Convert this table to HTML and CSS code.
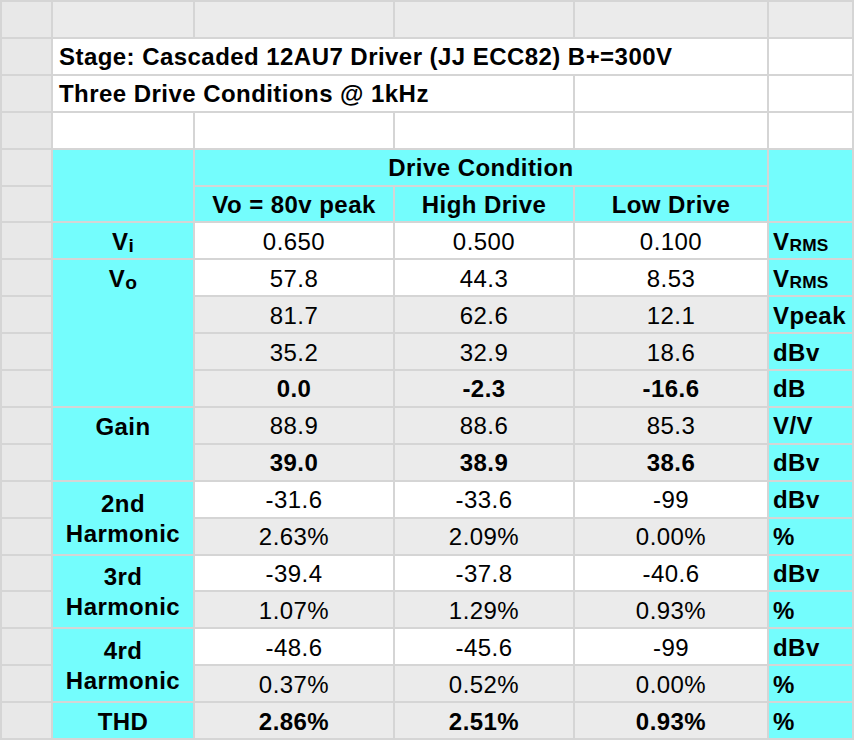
FILE: index.html
```html
<!DOCTYPE html>
<html>
<head>
<meta charset="utf-8">
<link rel="stylesheet" href="styles.css">
</head>
<body>
<div class="sheet">
  <!-- row 0 -->
  <div class="hd"></div><div class="gr"></div><div class="gr"></div><div class="gr"></div><div class="gr"></div><div class="gr"></div>
  <!-- row 1 -->
  <div class="hd"></div><div class="wh title c4"><span>Stage: Cascaded 12AU7 Driver (JJ ECC82) B+=300V</span></div><div class="wh"></div>
  <!-- row 2 -->
  <div class="hd"></div><div class="wh title c3"><span>Three Drive Conditions @ 1kHz</span></div><div class="wh"></div><div class="wh"></div>
  <!-- row 3 -->
  <div class="hd"></div><div class="wh"></div><div class="wh"></div><div class="wh"></div><div class="wh"></div><div class="wh"></div>
  <!-- row 4 -->
  <div class="hd"></div><div class="cy r2"></div><div class="cy lab c3"><span>Drive Condition</span></div><div class="cy r2"></div>
  <!-- row 5 -->
  <div class="hd"></div><div class="cy lab"><span>Vo = 80v peak</span></div><div class="cy lab"><span>High Drive</span></div><div class="cy lab"><span>Low Drive</span></div>
  <!-- row 6 -->
  <div class="hd"></div><div class="cy lab"><span>V<sub class="sl">i</sub></span></div><div class="wh num"><span>0.650</span></div><div class="wh num"><span>0.500</span></div><div class="wh num"><span>0.100</span></div><div class="cy unit"><span>V<sub>RMS</sub></span></div>
  <!-- row 7 -->
  <div class="hd"></div><div class="cy lab top r4"><span>V<sub class="sl">o</sub></span></div><div class="wh num"><span>57.8</span></div><div class="wh num"><span>44.3</span></div><div class="wh num"><span>8.53</span></div><div class="cy unit"><span>V<sub>RMS</sub></span></div>
  <!-- row 8 -->
  <div class="hd"></div><div class="gr num"><span>81.7</span></div><div class="gr num"><span>62.6</span></div><div class="gr num"><span>12.1</span></div><div class="cy unit"><span>Vpeak</span></div>
  <!-- row 9 -->
  <div class="hd"></div><div class="gr num"><span>35.2</span></div><div class="gr num"><span>32.9</span></div><div class="gr num"><span>18.6</span></div><div class="cy unit"><span>dBv</span></div>
  <!-- row 10 -->
  <div class="hd"></div><div class="gr num b"><span>0.0</span></div><div class="gr num b"><span>-2.3</span></div><div class="gr num b"><span>-16.6</span></div><div class="cy unit"><span>dB</span></div>
  <!-- row 11 -->
  <div class="hd"></div><div class="cy lab top r2"><span>Gain</span></div><div class="gr num"><span>88.9</span></div><div class="gr num"><span>88.6</span></div><div class="gr num"><span>85.3</span></div><div class="cy unit"><span>V/V</span></div>
  <!-- row 12 -->
  <div class="hd"></div><div class="gr num b"><span>39.0</span></div><div class="gr num b"><span>38.9</span></div><div class="gr num b"><span>38.6</span></div><div class="cy unit"><span>dBv</span></div>
  <!-- row 13 -->
  <div class="hd"></div><div class="cy lab multi r2"><span>2nd<br>Harmonic</span></div><div class="wh num"><span>-31.6</span></div><div class="wh num"><span>-33.6</span></div><div class="wh num"><span>-99</span></div><div class="cy unit"><span>dBv</span></div>
  <!-- row 14 -->
  <div class="hd"></div><div class="gr num"><span>2.63%</span></div><div class="gr num"><span>2.09%</span></div><div class="gr num"><span>0.00%</span></div><div class="cy unit"><span>%</span></div>
  <!-- row 15 -->
  <div class="hd"></div><div class="cy lab multi r2"><span>3rd<br>Harmonic</span></div><div class="wh num"><span>-39.4</span></div><div class="wh num"><span>-37.8</span></div><div class="wh num"><span>-40.6</span></div><div class="cy unit"><span>dBv</span></div>
  <!-- row 16 -->
  <div class="hd"></div><div class="gr num"><span>1.07%</span></div><div class="gr num"><span>1.29%</span></div><div class="gr num"><span>0.93%</span></div><div class="cy unit"><span>%</span></div>
  <!-- row 17 -->
  <div class="hd"></div><div class="cy lab multi r2"><span>4rd<br>Harmonic</span></div><div class="wh num"><span>-48.6</span></div><div class="wh num"><span>-45.6</span></div><div class="wh num"><span>-99</span></div><div class="cy unit"><span>dBv</span></div>
  <!-- row 18 -->
  <div class="hd"></div><div class="gr num"><span>0.37%</span></div><div class="gr num"><span>0.52%</span></div><div class="gr num"><span>0.00%</span></div><div class="cy unit"><span>%</span></div>
  <!-- row 19 -->
  <div class="hd"></div><div class="cy lab"><span>THD</span></div><div class="gr num b"><span>2.86%</span></div><div class="gr num b"><span>2.51%</span></div><div class="gr num b"><span>0.93%</span></div><div class="cy unit"><span>%</span></div>
</div>
</body>
</html>
```
FILE: styles.css
```css
html, body {
  margin: 0;
  padding: 0;
  background: #ffffff;
}

.sheet {
  width: 854px;
  height: 740px;
  box-sizing: border-box;
  padding: 2px;
  display: grid;
  grid-template-columns: 49px 140px 198px 178px 192px 83px;
  grid-template-rows: repeat(20, 1fr);
  gap: 2px;
  background: #d5d5d5;
  font-family: "Liberation Sans", Arial, Helvetica, sans-serif;
  font-size: 24px;
  letter-spacing: 0.45px;
  color: #000;
}

.sheet > div {
  display: flex;
  align-items: center;
  min-width: 0;
  min-height: 0;
  overflow: hidden;
  white-space: nowrap;
  padding-top: 2px;
  box-sizing: border-box;
}

.sheet > div > span {
  display: block;
}

.hd { background: #e8e8e8; }
.gr { background: #ebebeb; }
.wh { background: #ffffff; }
.cy { background: #74fdfd; }

.c3 { grid-column: span 3; }
.c4 { grid-column: span 4; }
.r2 { grid-row: span 2; }
.r4 { grid-row: span 4; }

.title {
  font-weight: bold;
  padding-left: 6px;
  padding-top: 5px;
}

.lab {
  font-weight: bold;
  justify-content: center;
  text-align: center;
}

.lab.top {
  align-items: flex-start;
}

.lab.top > span {
  line-height: 33px;
}

.lab.multi {
  white-space: normal;
  line-height: 30px;
}

.num {
  justify-content: center;
}

.b { font-weight: bold; }

.unit {
  font-weight: bold;
  padding-left: 4px;
}

sub {
  font-size: 0.72em;
  vertical-align: -0.06em;
  line-height: 0;
  letter-spacing: 0.2px;
}

sub.sl {
  font-size: 0.8em;
  vertical-align: -0.12em;
}
```
